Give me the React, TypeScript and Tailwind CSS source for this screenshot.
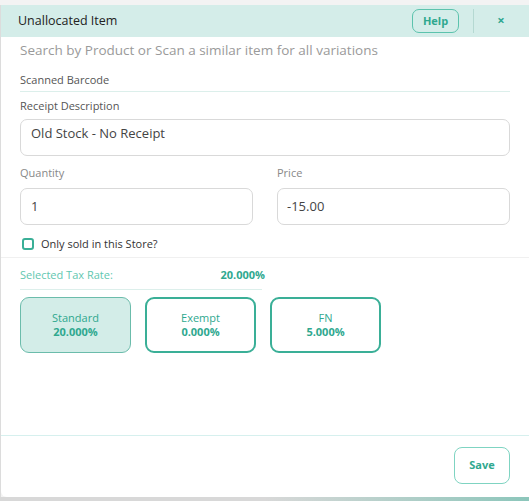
import React from "react";

const font = { fontFamily: '"Open Sans", "DejaVu Sans", sans-serif' };

function TaxCard({ name, rate, selected }: { name: string; rate: string; selected?: boolean }) {
  return (
    <div
      className={[
        "w-[111px] h-[56px] rounded-[9px] flex flex-col items-center justify-center text-[#2fa88f]",
        selected ? "bg-[#d3ede8] border border-[#6bbcab]" : "bg-white border-2 border-[#3aaf97]",
      ].join(" ")}
    >
      <span className="text-[11px] leading-[14px]">{name}</span>
      <span className="text-[11px] leading-[14px] font-bold">{rate}</span>
    </div>
  );
}

export default function App() {
  return (
    <div className="w-[529px] h-[501px] overflow-hidden bg-[#f3f3f3] flex flex-col" style={font}>
      <div className="h-[5px] shrink-0" />
      <div className="flex-1 flex">
        <div className="w-[1px] bg-[#dcdcdc]" />
        <div className="flex-1 bg-white rounded-bl-[6px] flex flex-col">
          {/* Header */}
          <div className="h-[32px] bg-[#d4ede9] flex items-center pl-[17px] pr-[15px]">
            <span className="text-[12.5px] text-[#222]">Unallocated Item</span>
            <div className="flex-1" />
            <button className="h-[24px] w-[47px] rounded-[7px] border border-[#5cc3ad] text-[11px] font-bold text-[#2fa88f]">
              Help
            </button>
            <span className="w-px h-[24px] bg-[#b5d9d2] mx-[14px]" />
            <span className="text-[13px] font-bold text-[#2fa88f] w-[26px] text-center">×</span>
          </div>

          <div className="px-[19px]">
            <p className="text-[13.5px] text-[#9a9a9a] mt-[3px] leading-[20px]">
              Search by Product or Scan a similar item for all variations
            </p>
            <p className="text-[11px] text-[#555] mt-[13px] leading-[14px]">Scanned Barcode</p>
            <div className="h-px bg-[#dcefeb] mt-[4px]" />
            <p className="text-[11px] text-[#555] mt-[7px] leading-[14px]">Receipt Description</p>
            <div className="mt-[6px] h-[37px] rounded-[7px] border border-[#d9d9d9] px-[10px] pt-[4px] text-[13px] text-[#444]">
              Old Stock - No Receipt
            </div>
            <div className="grid grid-cols-2 gap-[24px] mt-[10px]">
              <div>
                <p className="text-[11px] text-[#888] leading-[14px]">Quantity</p>
                <div className="mt-[8px] h-[37px] rounded-[7px] border border-[#d9d9d9] px-[10px] flex items-center text-[13px] text-[#444]">
                  1
                </div>
              </div>
              <div>
                <p className="text-[11px] text-[#888] leading-[14px]">Price</p>
                <div className="mt-[8px] h-[37px] rounded-[7px] border border-[#d9d9d9] px-[9px] flex items-center text-[13px] text-[#444]">
                  -15.00
                </div>
              </div>
            </div>
            <label className="flex items-center gap-[7px] mt-[11px] ml-[2px]">
              <span className="w-[12px] h-[12px] rounded-[3px] border-2 border-[#3aaf97]" />
              <span className="text-[11px] text-[#333]">Only sold in this Store?</span>
            </label>
          </div>

          <div className="h-px bg-[#f0f0f0] mt-[4px]" />

          <div className="px-[19px]">
            <div className="w-[245px] flex items-center justify-between mt-[9px]">
              <span className="text-[11px] text-[#5fc7b1]">Selected Tax Rate:</span>
              <span className="text-[11px] font-bold text-[#2fa88f]">20.000%</span>
            </div>
            <div className="w-[242px] h-px bg-[#dcefeb] mt-[6px]" />
            <div className="flex gap-[14px] mt-[7px]">
              <TaxCard name="Standard" rate="20.000%" selected />
              <TaxCard name="Exempt" rate="0.000%" />
              <TaxCard name="FN" rate="5.000%" />
            </div>
          </div>

          <div className="flex-1" />
          <div className="h-px bg-[#d6f0ee]" />
          <div className="h-[61px] flex items-start justify-end pr-[19px] pt-[11px]">
            <button className="w-[56px] h-[37px] rounded-[8px] border border-[#7fd4c2] text-[11px] font-bold text-[#2fa88f]">
              Save
            </button>
          </div>
        </div>
      </div>
      <div className="h-[4px] shrink-0 bg-gradient-to-r from-[#d8d8d8] via-[#d8d8d8] to-[#8cc6bb]" />
    </div>
  );
}
